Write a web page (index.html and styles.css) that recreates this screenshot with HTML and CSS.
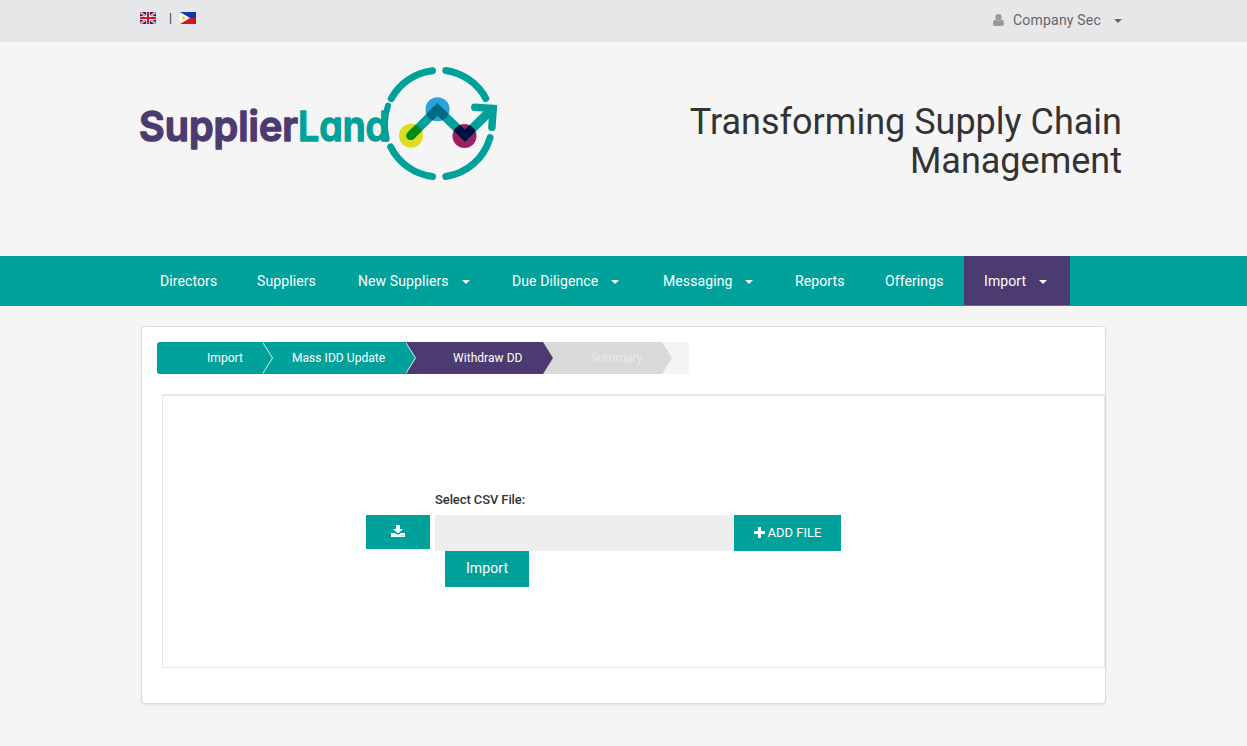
FILE: index.html
```html
<!DOCTYPE html>
<html lang="en">
<head>
<meta charset="utf-8">
<title>SupplierLand</title>
<link rel="stylesheet" href="styles.css">
</head>
<body>
<div class="topbar">
  <div class="langs">
    <svg class="flag" viewBox="0 0 16 12"><path fill="#27256f" d="M0 0h16v12H0z"/><path stroke="#fff" stroke-width="2" d="M0 0l16 12M16 0L0 12"/><path stroke="#d8253c" stroke-width=".8" d="M0 0l16 12M16 0L0 12"/><path stroke="#fff" stroke-width="3.400" d="M8 0v12M0 6h16"/><path stroke="#d0142c" stroke-width="2" d="M8 0v12M0 6h16"/></svg>
    <span class="divider">|</span>
    <svg class="flag" viewBox="0 0 16 12"><path fill="#1238a8" d="M0 0h16v6H0z"/><path fill="#d3142b" d="M0 6h16v6H0z"/><path fill="#fff" d="M0 0l10 6-10 6z"/><circle cx="3.500" cy="6" r="1.800" fill="#f2cf45"/><path fill="#f5dc80" d="M0 1h1v1H0zM0 10h1v1H0zM7 5.500h1v1H7z"/></svg>
  </div>
  <div class="user">
    <svg class="person" viewBox="0 0 11 12"><circle cx="5.500" cy="3.200" r="3.100"/><path d="M2.400 5.500C.5 5.800 0 7.500 0 9.800 0 11.200.8 12 2 12h7c1.200 0 2-.8 2-2.200 0-2.300-.5-4-2.400-4.300C7 7.100 4 7.100 2.400 5.500z"/></svg>
    <span class="username">Company Sec</span><i class="caret"></i>
  </div>
</div>
<header class="header">
  <svg class="logo" viewBox="138 62 364 122" role="img">
    <defs><clipPath id="dots"><circle cx="411" cy="135.700" r="12"/><circle cx="437.500" cy="109.300" r="12"/><circle cx="464.500" cy="136" r="12"/></clipPath></defs>
    <text class="word purple" x="139" y="141" textLength="159" lengthAdjust="spacingAndGlyphs">Supplier</text>
    <text class="word teal" x="298" y="141" textLength="91" lengthAdjust="spacingAndGlyphs">Land</text>
    <g class="arcs">
      <path d="M391.300 98.700A54 54 0 0 1 432.500 70.700M445.800 70.500A54 54 0 0 1 485.800 98.500M490 137.700A54 54 0 0 1 445.800 176.500M390.700 147A54 54 0 0 0 432.500 176.500"/>
      <path class="thin" d="M388 105.700A60 60 0 0 0 386.700 139"/>
    </g>
    <circle cx="411" cy="135.700" r="12" fill="#dcdc20"/>
    <circle cx="437.500" cy="109.300" r="12" fill="#29a3dd"/>
    <circle cx="464.500" cy="136" r="12" fill="#9b2062"/>
    <path class="trend" d="M410.800 135.600l26.600-26.300L465 135.700l27-26.500"/>
    <path class="head" d="M474.800 107.200l18.400 1.300-1.300 18.700"/>
    <g clip-path="url(#dots)">
      <path class="trend green" d="M410.800 135.600l26.600-26.300"/>
      <path class="trend blue" d="M423 123.600l14.400-14.300L451 122.400"/>
      <path class="trend navy" d="M451.500 122.600L465 135.700l13-12.800"/>
    </g>
  </svg>
  <h1 class="tagline">Transforming Supply Chain Management</h1>
</header>
<nav class="nav">
  <a class="item">Directors</a>
  <a class="item">Suppliers</a>
  <a class="item">New Suppliers<i class="caret"></i></a>
  <a class="item">Due Diligence<i class="caret"></i></a>
  <a class="item">Messaging<i class="caret"></i></a>
  <a class="item">Reports</a>
  <a class="item">Offerings</a>
  <a class="item active">Import<i class="caret"></i></a>
</nav>
<main class="card">
  <div class="steps">
    <div class="step s1">Import</div>
    <div class="step s2">Mass IDD Update</div>
    <div class="step s3">Withdraw DD</div>
    <div class="step s4">Summary</div>
  </div>
  <section class="panel">
    <div class="form">
      <button class="btn download" aria-label="Download"><svg viewBox="0 0 14 12"><path d="M5 0h4v4h3L7 8.500 2 4h3z"/><path d="M0 8h4l1.800 1.600h2.400L10 8h4v4H0z"/><path fill="#00a19a" opacity=".5" d="M9.500 10h1v1h-1zM11.500 10h1v1h-1z"/></svg></button>
      <div class="fields">
        <label class="label">Select CSV File:</label>
        <div class="file"><div class="filename"></div><button class="btn add"><svg viewBox="0 0 11 11"><path d="M4 0h3v4h4v3H7v4H4V7H0V4h4z"/></svg><span>ADD FILE</span></button></div>
        <button class="btn import">Import</button>
      </div>
    </div>
  </section>
</main>
</body>
</html>
```
FILE: styles.css
```css
* { box-sizing: border-box; }
body { margin: 0; height: 746px; overflow: hidden; background: #f5f5f5; color: #333; font-family: Roboto, sans-serif; font-size: 14px; }
svg { display: block; }
.topbar { display: flex; justify-content: space-between; height: 42px; padding: 0 125px 0 140px; background: #e6e7e9; }
.langs { display: flex; align-items: flex-start; padding-top: 12px; }
.flag { width: 16px; height: 12px; }
.divider { width: 24px; text-align: center; padding-left: 5px; font-size: 12px; font-weight: 500; line-height: 12px; }
.user { display: flex; align-items: center; height: 40px; color: #666; letter-spacing: 0.2px; }
.person { width: 11px; height: 12px; margin-right: 9px; fill: #999; }
.caret { display: inline-block; border: 4px solid transparent; border-top-color: currentColor; border-bottom: 0; margin-left: 13px; }
.user .caret { margin-top: 2px; }
.header { display: flex; justify-content: space-between; align-items: flex-start; height: 214px; padding: 20px 125px 0 138px; }
.logo { width: 364px; height: 122px; }
.word { font: 600 41px Inter, sans-serif; font-feature-settings: "cv11"; stroke-width: 1.5; stroke-linejoin: round; }
.purple { fill: #4c3b70; stroke: #4c3b70; }
.teal { fill: #00a19a; stroke: #00a19a; }
.arcs, .trend, .head { fill: none; stroke: #00a19a; stroke-linecap: round; stroke-linejoin: miter; }
.arcs { stroke-width: 7; }
.thin { stroke-width: 6; }
.trend { stroke-width: 9; }
.head { stroke-width: 7.5; }
.green { stroke: #008a16; }
.blue { stroke: #006985; }
.navy { stroke: #001040; }
.tagline { width: 470px; margin: 41px 0 0; text-align: right; font-size: 36px; font-weight: 400; line-height: 39px; }
.nav { display: grid; grid-template-columns: 97px 101px 154px 151px 132px 90px 99px 106px; height: 50px; padding-left: 140px; background: #00a19a; color: #fff; letter-spacing: .1px; }
.item { height: 49px; padding-left: 20px; line-height: 50px; white-space: nowrap; }
.item .caret { vertical-align: 2px; }
.active { background: #4c3b70; }
.card { width: 965px; height: 378px; margin: 20px 0 0 141px; padding: 15px 0 0 15px; background: #fff; border: 1px solid #dcdcdc; border-radius: 4px; box-shadow: 0 1px 2px rgba(0,0,0,.07); }
.steps { display: flex; width: 532px; height: 32px; background: #f4f4f4; border-radius: 3px; overflow: hidden; font-size: 12px; letter-spacing: .05px; line-height: 32px; color: #fff; }
.step { position: relative; white-space: nowrap; }
.step::before, .step::after { content: ""; position: absolute; top: 0; left: 100%; width: 10px; height: 32px; clip-path: polygon(0 0, 100% 50%, 0 100%); }
.step::before { background: #d5efed; margin-left: 1px; }
.step::after { background: inherit; }
.s1, .s2 { background: #00a19a; }
.s1 { width: 105px; padding-left: 50px; z-index: 4; }
.s2 { width: 143px; padding-left: 30px; z-index: 3; }
.s3 { width: 138px; padding-left: 48px; background: #4c3b70; z-index: 2; }
.s4 { width: 119px; padding-left: 48px; background: #d9d9d9; color: #e9e9e9; z-index: 1; }
.s3::before, .s4::before { display: none; }
.panel { width: 943px; height: 274px; margin: 20px 0 0 5px; border: 1px solid #e8e8e8; border-top-width: 2px; padding: 95px 0 0 203px; }
.form { display: flex; align-items: flex-start; gap: 5px; }
.btn { display: flex; align-items: center; justify-content: center; border: 0; padding: 0; background: #00a19a; color: #fff; font: 400 14px Roboto, sans-serif; }
.btn svg { fill: #fff; }
.download { width: 64px; height: 34px; margin-top: 24px; }
.download svg { width: 14px; height: 12px; margin-bottom: 2px; }
.label { display: block; height: 24px; line-height: 17px; font-size: 13px; font-weight: 500; letter-spacing: -.1px; }
.file { display: flex; }
.filename { width: 299px; height: 36px; background: #eee; }
.add { width: 107px; height: 36px; gap: 3px; padding-bottom: 2px; font-size: 13px; }
.add svg { width: 11px; height: 11px; }
.import { width: 84px; height: 36px; margin-left: 10px; padding-bottom: 2px; letter-spacing: .1px; }
```
